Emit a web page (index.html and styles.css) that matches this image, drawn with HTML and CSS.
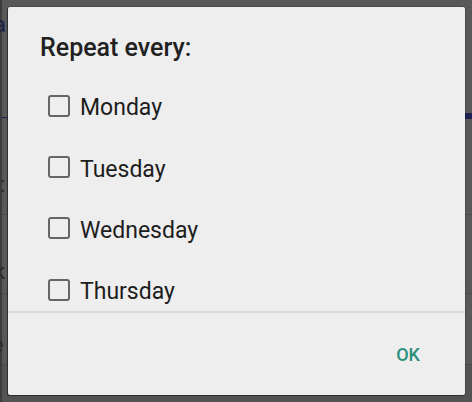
FILE: index.html
```html
<!DOCTYPE html>
<html>
<head>
<meta charset="utf-8">
<link rel="stylesheet" href="styles.css">
</head>
<body>
<div class="app">
  <div class="app-header"><span class="app-title">a</span></div>
  <div class="app-tabs"><div class="tab-line"></div><div class="tab-indicator"></div></div>
  <div class="app-row r1"><span class="row-text">:</span></div>
  <div class="app-row r2"><span class="row-text">k</span></div>
  <div class="app-row r3"><span class="row-text">e</span></div>
  <div class="app-row r4"></div>
</div>
<div class="dialog">
  <div class="dialog-title">Repeat every:</div>
  <div class="dialog-list">
    <label class="item"><span class="box"></span><span class="label">Monday</span></label>
    <label class="item"><span class="box"></span><span class="label">Tuesday</span></label>
    <label class="item"><span class="box"></span><span class="label">Wednesday</span></label>
    <label class="item"><span class="box"></span><span class="label">Thursday</span></label>
    <label class="item"><span class="box"></span><span class="label">Friday</span></label>
  </div>
  <div class="dialog-actions"><span class="btn">OK</span></div>
</div>
</body>
</html>
```
FILE: styles.css
```css
html, body {
  margin: 0;
  padding: 0;
}
body {
  width: 472px;
  height: 402px;
  overflow: hidden;
  position: relative;
  background: #585858;
  font-family: Roboto, "Noto Sans", sans-serif;
}
.app {
  display: flex;
  flex-direction: column;
  height: 402px;
  border-left: 2px solid #3c3c3c;
}
.app-header {
  height: 110px;
}
.app-title {
  display: block;
  margin-left: -8px;
  margin-top: 12px;
  font-size: 22px;
  color: #1a1f4a;
}
.app-tabs {
  height: 100px;
  position: relative;
}
.tab-line {
  height: 1px;
  background: #1c2150;
  margin-top: 7px;
}
.tab-indicator {
  position: absolute;
  right: 0;
  top: 3px;
  width: 40px;
  height: 6px;
  background: #1c2150;
}
.app-row {
  border-top: 1px solid #4a4a4a;
  color: #2a2a2a;
  font-size: 22px;
}
.r1 { height: 0; border-top: none; }
.r2 { height: 78px; margin-top: 4px; }
.r3 { height: 70px; }
.r4 { flex: 1; background: #535353; }
.row-text {
  display: block;
  margin-left: -6px;
  padding-top: 36px;
}
.r1 .row-text { margin-top: -38px; padding-top: 0; margin-left: -2px; }
.r2 .row-text { padding-top: 44px; margin-left: -8px; }
.r3 .row-text { padding-top: 38px; margin-left: -10px; }

.dialog {
  position: absolute;
  left: 8px;
  top: 7px;
  width: 457px;
  height: 388px;
  background: #eeeeee;
  border-radius: 2px;
  box-shadow: -1px 1px 0 #2e2e2e, 0 0 0 1px rgba(0,0,0,0.15);
  display: flex;
  flex-direction: column;
  overflow: hidden;
}
.dialog-title {
  padding: 27px 0 0 32px;
  font-size: 25px;
  font-weight: 500;
  line-height: 28px;
  color: #212121;
}
.dialog-list {
  margin-top: 13px;
  height: 236px;
  flex: none;
  overflow: hidden;
  display: flex;
  flex-direction: column;
  border-bottom: 2px solid #d9d9d9;
}
.item {
  flex: 0 0 61.4px;
  display: flex;
  align-items: center;
  padding-left: 40px;
  gap: 10px;
}
.box {
  width: 18px;
  height: 18px;
  border: 2px solid #666666;
  border-radius: 3px;
  flex: none;
}
.label {
  font-size: 23px;
  color: #1d1d1d;
  position: relative;
  top: 2px;
}
.dialog-actions {
  flex: 1;
  display: flex;
  justify-content: flex-end;
  align-items: center;
  padding-right: 45px;
}
.btn {
  font-size: 18px;
  font-weight: 500;
  color: #2a8f7d;
}
```
